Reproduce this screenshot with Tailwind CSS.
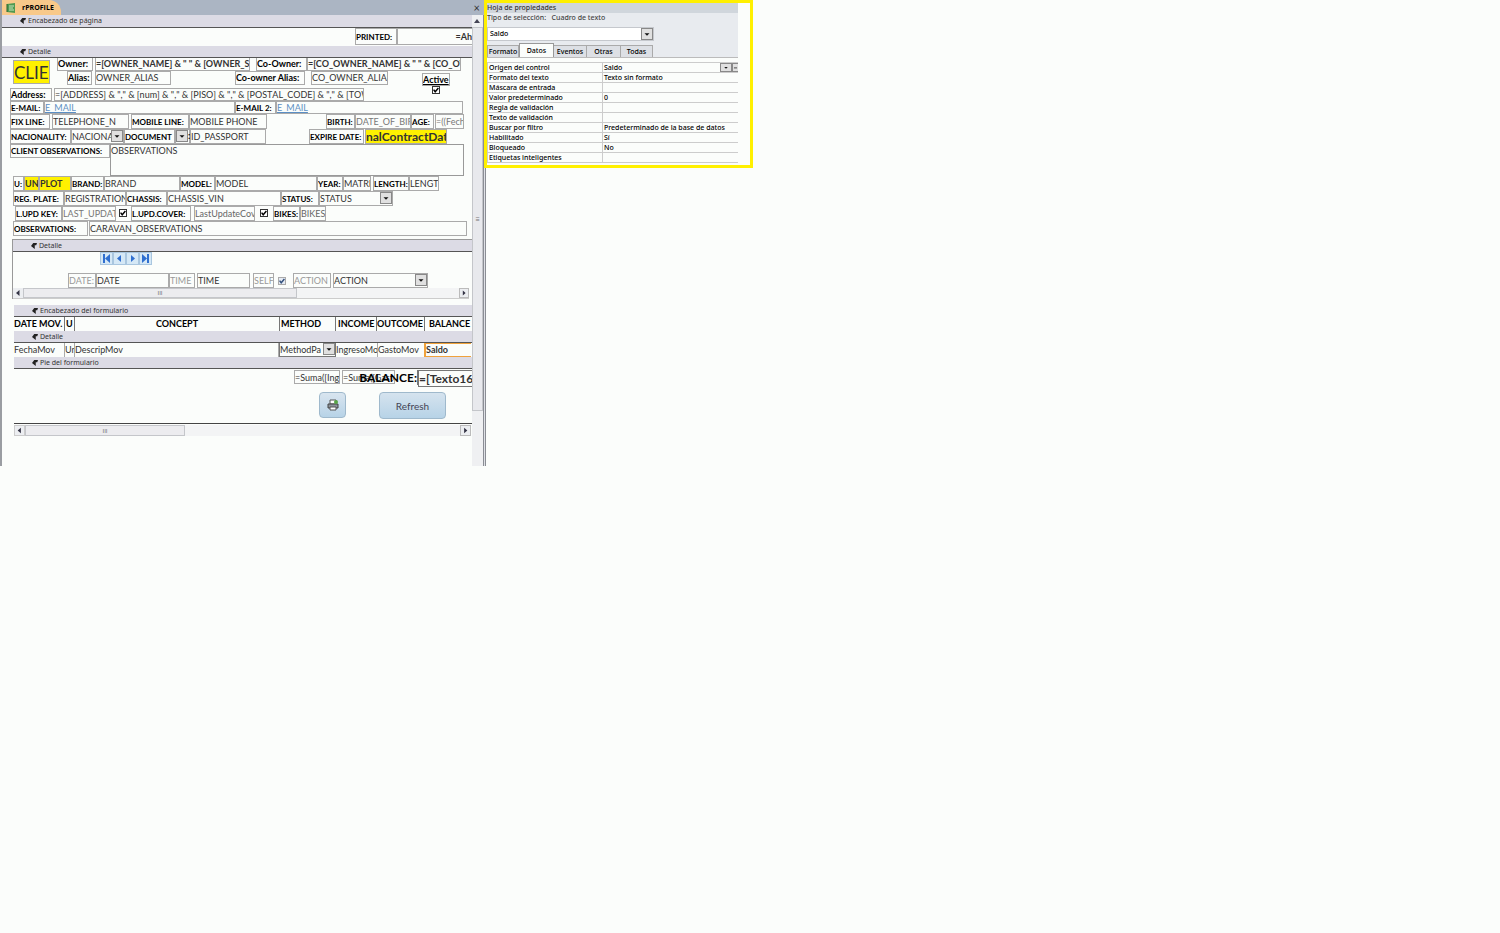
<!DOCTYPE html>
<html lang="es">
<head>
<meta charset="utf-8">
<title>rPROFILE</title>
<script src="https://cdn.jsdelivr.net/npm/@tailwindcss/browser@4"></script>
</head>
<body class="min-h-screen bg-[#fbfdfb] text-[#222]">
<svg class="hidden">
  <symbol id="down" viewBox="0 0 12 12"><path d="M3 5h6L6 8z" fill="#111"/></symbol>
  <symbol id="tick" viewBox="0 0 10 10"><path d="M2 4.5 4 7.2 8 2.5" fill="none" stroke="currentColor" stroke-width="1.8"/></symbol>
  <symbol id="bandmark" viewBox="0 0 8 8"><path d="M3 0h5L7 3H5v5L0 4z" fill="#222"/></symbol>
  <symbol id="left" viewBox="0 0 10 10"><path d="M6.500 2v6L3 5z" fill="#334"/></symbol>
  <symbol id="right" viewBox="0 0 10 10"><path d="M3.500 2v6L7 5z" fill="#334"/></symbol>
</svg>
<div class="flex items-start">

<!-- Form in design view -->
<main class="w-[486px] shrink-0 border-l-2 border-[#9a9da2] font-[Lato,sans-serif] text-[9px] leading-[12px] [&_label]:flex [&_label]:shrink-0 [&_label]:items-center [&_label]:overflow-hidden [&_label]:whitespace-nowrap [&_label]:border [&_label]:border-[#aaa] [&_label]:font-bold [&_label]:text-black [&_input]:min-w-0 [&_input]:shrink-0 [&_input]:border [&_input]:border-[#aaa] [&_input]:text-[#333] [&_select]:appearance-none [&_select]:min-w-0 [&_select]:flex-1 [&_select]:text-[#333]">
  <div class="flex h-[15px] items-stretch bg-[#abb5c3] pr-[6px]">
    <div class="flex w-[59px] items-center gap-[6px] rounded-tr-xl bg-[#f8c98a] pl-1 font-[Open_Sans,sans-serif] text-[7px] font-bold text-black">
      <svg class="size-[10px]" viewBox="0 0 10 10"><path d="M1 1 9 0v10L1 9z" fill="#4f9a52"/><path d="M3 3h5M3 5h4M3 7h5" stroke="#cde8bd"/><path d="M1 1v8" stroke="#27632f"/></svg>
      rPROFILE
    </div>
    <button class="ml-auto text-[11px] leading-[14px] text-[#333]" aria-label="Cerrar">×</button>
  </div>

  <div class="flex">
    <div class="w-[470px] shrink-0">
      <div class="flex h-[13px] items-center gap-[2px] border-b border-[#555] bg-[#dcdbe5] pl-[18px] font-[Noto_Sans,sans-serif] text-[7px] text-[#333]"><svg class="size-[6px]"><use href="#bandmark"/></svg>Encabezado de página</div>
      <div class="flex h-[18px] items-start pl-[353px]">
        <label for="printed" class="h-[17px] w-[42px] text-[8px]">PRINTED:</label>
        <input id="printed" value="=Ah" class="h-[17px] flex-1 border-r-0! text-right font-bold">
      </div>
      <div class="flex h-[12px] items-center gap-[2px] border-b border-[#555] bg-[#dcdbe5] pl-[18px] font-[Noto_Sans,sans-serif] text-[7px] text-[#333]"><svg class="size-[6px]"><use href="#bandmark"/></svg>Detalle</div>

      <!-- Client -->
      <div class="flex h-[30px] pl-[11px]">
        <input aria-label="Client" value="CLIE" class="mt-[2px] h-[24px] w-[37px] bg-[#fff100] text-[17px]">
        <div>
          <div class="flex h-[13px] pl-[7px]">
            <label for="owner" class="w-[36px] border-t-0!">Owner:</label>
            <input id="owner" value='=[OWNER_NAME] &amp; " " &amp; [OWNER_SURNAME]' class="ml-[2px] w-[155px] border-t-0! font-bold">
            <label for="coowner" class="ml-[6px] w-[51px] border-t-0!">Co-Owner:</label>
            <input id="coowner" value='=[CO_OWNER_NAME] &amp; " " &amp; [CO_OWNER]' class="w-[154px] border-t-0! font-bold">
          </div>
          <div class="flex h-[14px] pl-[17px]">
            <label for="alias" class="w-[25px]">Alias:</label>
            <input id="alias" value="OWNER_ALIAS" class="ml-[3px] w-[76px]">
            <label for="coalias" class="ml-[64px] w-[70px]">Co-owner Alias:</label>
            <input id="coalias" value="CO_OWNER_ALIAS" class="ml-[6px] w-[77px]">
            <div class="ml-[34px] mt-[2px] flex flex-col items-center">
              <label for="active" class="h-[13px] underline">Active</label>
              <span class="grid size-[8px]"><input id="active" type="checkbox" checked class="size-[8px] appearance-none border-[#333]! bg-white [grid-area:1/1]"><svg class="pointer-events-none size-[8px] text-black [grid-area:1/1]"><use href="#tick"/></svg></span>
            </div>
          </div>
        </div>
      </div>
      <div class="flex h-[13px] pl-[8px]">
        <label for="address" class="w-[42px]">Address:</label>
        <input id="address" value='=[ADDRESS] &amp; "," &amp; [num] &amp; "," &amp; [PISO] &amp; "," &amp; [POSTAL_CODE] &amp; "," &amp; [TOWN]' class="ml-[2px] w-[310px] [font-kerning:none]">
      </div>
      <div class="[&_label]:text-[8px]">
      <div class="flex h-[13px] pl-[8px]">
        <label for="email" class="w-[34px]">E-MAIL:</label>
        <input id="email" value="E_MAIL" class="w-[191px] text-[#5b8fc4]! underline">
        <label for="email2" class="w-[41px]">E-MAIL 2:</label>
        <input id="email2" value="E_MAIL" class="w-[187px] text-[#5b8fc4]! underline">
      </div>
      <div class="flex h-[15px] pl-[8px]">
        <label for="fix" class="w-[40px]">FIX LINE:</label>
        <input id="fix" value="TELEPHONE_N" class="ml-[2px] w-[77px]">
        <label for="mobile" class="ml-[2px] w-[58px]">MOBILE LINE:</label>
        <input id="mobile" value="MOBILE PHONE" class="w-[78px]">
        <label for="birth" class="ml-[59px] w-[29px]">BIRTH:</label>
        <input id="birth" value="DATE_OF_BIRTH" class="w-[56px] text-[#777]!">
        <label for="age" class="w-[23px]">AGE:</label>
        <input id="age" value="=((Fecha" class="ml-px w-[29px] text-[#777]!">
      </div>
      <div class="flex h-[15px] pl-[8px]">
        <label for="nac" class="w-[61px]">NACIONALITY:</label>
        <span class="flex w-[53px] border border-[#aaa]"><select id="nac"><option>NACIONA</option></select><svg class="size-[12px] border border-[#888] bg-[#e0e0e0]"><use href="#down"/></svg></span>
        <label for="doc" class="w-[51px]">DOCUMENT</label>
        <span class="flex w-[15px] border border-[#aaa] font-bold text-black"><svg class="size-[12px] shrink-0 border border-[#888] bg-[#e0e0e0]"><use href="#down"/></svg>:</span>
        <input id="doc" value="ID_PASSPORT" class="w-[76px]">
        <label for="expire" class="ml-[43px] w-[55px]">EXPIRE DATE:</label>
        <input id="expire" value="nalContractDate" class="ml-px w-[82px] bg-[#fff100] text-[12px] font-bold text-[#222]">
      </div>
      <div class="flex h-[32px] items-start pl-[8px]">
        <label for="obs" class="h-[14px] w-[100px]">CLIENT OBSERVATIONS:</label>
        <textarea id="obs" class="h-[32px] w-[354px] resize-none overflow-hidden border border-[#999] text-[#333]">OBSERVATIONS</textarea>
      </div>

      <!-- Caravan -->
      <div class="flex h-[15px] pl-[11px]">
        <label for="unit" class="w-[11px]">U:</label>
        <input id="unit" value="UN" class="w-[15px] bg-[#fff100] font-bold">
        <input aria-label="Plot" value="PLOT" class="w-[32px] bg-[#fff100] font-bold">
        <label for="brand" class="w-[33px]">BRAND:</label>
        <input id="brand" value="BRAND" class="w-[76px]">
        <label for="model" class="w-[35px]">MODEL:</label>
        <input id="model" value="MODEL" class="w-[102px]">
        <label for="year" class="w-[26px]">YEAR:</label>
        <input id="year" value="MATRICULA" class="w-[28px]">
        <label for="length" class="ml-[2px] w-[36px]">LENGTH:</label>
        <input id="length" value="LENGTH" class="w-[30px]">
      </div>
      <div class="flex h-[15px] pl-[11px]">
        <label for="plate" class="w-[51px]">REG. PLATE:</label>
        <input id="plate" value="REGISTRATION" class="w-[62px]">
        <label for="chassis" class="w-[41px]">CHASSIS:</label>
        <input id="chassis" value="CHASSIS_VIN" class="w-[114px]">
        <label for="status" class="w-[38px]">STATUS:</label>
        <span class="flex w-[74px] border border-[#aaa]"><select id="status"><option>STATUS</option></select><svg class="size-[12px] border border-[#888] bg-[#e0e0e0]"><use href="#down"/></svg></span>
      </div>
      <div class="flex h-[15px] pl-[13px]">
        <label for="updkey" class="w-[47px]">L.UPD KEY:</label>
        <input id="updkey" value="LAST_UPDATE" class="w-[54px] text-[#777]!">
        <span class="ml-[3px] mt-[3px] grid size-[8px]"><input aria-label="Key" type="checkbox" checked class="size-[8px] appearance-none border-[#333]! bg-white [grid-area:1/1]"><svg class="pointer-events-none size-[8px] text-black [grid-area:1/1]"><use href="#tick"/></svg></span>
        <label for="updcover" class="ml-[4px] w-[60px]">L.UPD.COVER:</label>
        <input id="updcover" value="LastUpdateCover" class="ml-[3px] w-[61px] text-[#666]!">
        <span class="ml-[5px] mt-[3px] grid size-[8px]"><input aria-label="Cover" type="checkbox" checked class="size-[8px] appearance-none border-[#333]! bg-white [grid-area:1/1]"><svg class="pointer-events-none size-[8px] text-black [grid-area:1/1]"><use href="#tick"/></svg></span>
        <label for="bikes" class="ml-[5px] w-[27px]">BIKES:</label>
        <input id="bikes" value="BIKES" class="w-[26px] text-[#666]!">
      </div>
      <div class="flex h-[15px] pl-[11px]">
        <label for="caravan" class="w-[75px]">OBSERVATIONS:</label>
        <input id="caravan" value="CARAVAN_OBSERVATIONS" class="ml-px w-[378px]">
      </div>
      </div>

      <!-- Actions subform -->
      <section class="ml-[10px] mt-[3px] border-l border-t border-[#999]">
        <div class="flex h-[12px] items-center gap-[2px] border-b border-[#555] bg-[#dcdbe5] pl-[18px] font-[Noto_Sans,sans-serif] text-[7px] text-[#333]"><svg class="size-[6px]"><use href="#bandmark"/></svg>Detalle</div>
        <div class="flex h-[21px] items-start pl-[87px] text-[#2f6fd0]">
          <button aria-label="Primero" class="border border-[#a9c6df] bg-[#d5e8f6]"><svg class="size-[11px]" viewBox="0 0 11 11"><path d="M2 1h2v9H2zM9 1v9L4 5.500z" fill="currentColor"/></svg></button>
          <button aria-label="Anterior" class="border border-[#a9c6df] bg-[#d5e8f6]"><svg class="size-[11px]" viewBox="0 0 11 11"><path d="M7 2v7L3 5.500z" fill="currentColor"/></svg></button>
          <button aria-label="Siguiente" class="border border-[#a9c6df] bg-[#d5e8f6]"><svg class="size-[11px]" viewBox="0 0 11 11"><path d="M4 2v7l4-3.500z" fill="currentColor"/></svg></button>
          <button aria-label="Último" class="border border-[#a9c6df] bg-[#d5e8f6]"><svg class="size-[11px]" viewBox="0 0 11 11"><path d="M7 1h2v9H7zM2 1v9l5-4.500z" fill="currentColor"/></svg></button>
        </div>
        <div class="flex h-[15px] pl-[55px]">
          <label for="date" class="w-[28px] font-normal! text-[#999]!">DATE:</label>
          <input id="date" value="DATE" class="w-[73px]">
          <label for="time" class="w-[26px] font-normal! text-[#999]!">TIME</label>
          <input id="time" value="TIME" class="ml-[2px] w-[53px]">
          <label for="self" class="ml-[3px] w-[21px] font-normal! text-[#999]!">SELF</label>
          <span class="ml-[4px] mt-[4px] grid size-[8px]"><input id="self" type="checkbox" checked class="size-[8px] appearance-none bg-[#e5ebf3] [grid-area:1/1]"><svg class="pointer-events-none size-[8px] text-[#33507c] [grid-area:1/1]"><use href="#tick"/></svg></span>
          <label for="action" class="ml-[7px] w-[38px] font-normal! text-[#999]!">ACTION</label>
          <span class="ml-[2px] flex w-[95px] border border-[#aaa]"><select id="action"><option>ACTION</option></select><svg class="size-[12px] border border-[#888] bg-[#e0e0e0]"><use href="#down"/></svg></span>
        </div>
        <div class="flex h-[11px] w-[456px] border-b border-[#ccc] bg-[#f3f4f5]">
          <svg class="size-[10px] bg-[#eceef1]"><use href="#left"/></svg>
          <div class="flex w-[274px] items-center justify-center border border-[#c4c6ca] bg-[#ececef] text-[6px] text-[#777]">III</div>
          <svg class="ml-auto size-[10px] border border-[#bbb] bg-[#eceef1]"><use href="#right"/></svg>
        </div>
      </section>

      <!-- Movements subform -->
      <section class="ml-[12px] mt-[6px] [&_label]:border-y-0! [&_label]:border-l-0! [&_label]:border-[#777]!">
        <div class="flex h-[12px] items-center gap-[2px] border-b border-[#555] bg-[#dcdbe5] pl-[18px] font-[Noto_Sans,sans-serif] text-[7px] text-[#333]"><svg class="size-[6px]"><use href="#bandmark"/></svg>Encabezado del formulario</div>
        <div class="flex h-[14px]">
          <label for="fecha" class="w-[51px]">DATE MOV.</label>
          <label for="un" class="w-[10px] pl-px">U</label>
          <label for="descrip" class="w-[205px] justify-center">CONCEPT</label>
          <label for="method" class="w-[56px] pl-px">METHOD</label>
          <label for="ingreso" class="w-[41px] pl-[2px]">INCOME</label>
          <label for="gasto" class="w-[48px]">OUTCOME</label>
          <label for="saldo" class="w-[47px] border-r-0! pl-[4px]">BALANCE</label>
        </div>
        <div class="flex h-[12px] items-center gap-[2px] border-b border-[#555] bg-[#dcdbe5] pl-[18px] font-[Noto_Sans,sans-serif] text-[7px] text-[#333]"><svg class="size-[6px]"><use href="#bandmark"/></svg>Detalle</div>
        <div class="flex h-[14px] [&_input]:border-y-0!">
          <input id="fecha" value="FechaMov" class="w-[51px] border-l-0!">
          <input id="un" value="Unidad" class="w-[10px] border-l-0!">
          <input id="descrip" value="DescripMov" class="w-[204px] border-l-0!">
          <span class="flex w-[57px] border border-t-0 border-[#777]"><select id="method"><option>MethodPa</option></select><svg class="size-[12px] border border-[#888] bg-[#e0e0e0]"><use href="#down"/></svg></span>
          <input id="ingreso" value="IngresoMov" class="w-[42px] border-l-0!">
          <input id="gasto" value="GastoMov" class="w-[46px] border-x-0!">
          <span class="flex w-[47px] border-y border-l-2 border-[#f0a23c]"><input id="saldo" value="Saldo" class="w-full border-x-0! font-bold"></span>
        </div>
        <div class="flex h-[12px] items-center gap-[2px] border-b border-[#555] bg-[#dcdbe5] pl-[18px] font-[Noto_Sans,sans-serif] text-[7px] text-[#333]"><svg class="size-[6px]"><use href="#bandmark"/></svg>Pie del formulario</div>
        <div class="h-[55px] border-b border-[#444]">
          <div class="flex h-[19px] items-start pl-[280px] pt-px">
            <input aria-label="Suma ingresos" value="=Suma([Ingreso])" class="h-[14px] w-[46px]">
            <input aria-label="Suma gastos" value="=Suma([Gasto])" class="ml-[2px] h-[14px] w-[53px]">
            <label for="total" class="-ml-[46px] h-[15px] w-[69px] justify-end border-x! border-b! text-[12px]">BALANCE:</label>
            <input id="total" value="=[Texto16]" class="h-[17px] w-[54px] border-r-0! border-[#777]! text-[12px] font-bold">
          </div>
          <div class="flex pl-[305px] pt-[4px]">
            <button aria-label="Imprimir" class="flex h-[26px] w-[27px] items-center justify-center rounded-sm border border-[#9fb9cc] bg-gradient-to-b from-[#d9e5ef] to-[#b7d3e7]"><svg class="size-[12px]" viewBox="0 0 12 12"><path d="M3 1h6v4H3z" fill="#fff" stroke="#555"/><path d="M1 5h10v4H1z" fill="#8a9299" stroke="#444"/><path d="M3 8h6v3H3z" fill="#fff" stroke="#555"/><circle cx="9" cy="3" r="2" fill="#58a646"/></svg></button>
            <button class="ml-[33px] h-[27px] w-[67px] rounded-sm border border-[#9fb9cc] bg-gradient-to-b from-[#d5e3ee] to-[#b7d3e7] text-[10px] text-[#445]">Refresh</button>
          </div>
        </div>
        <div class="mt-px flex h-[11px] w-[457px] bg-[#f3f4f5]">
          <svg class="h-[11px] w-[11px] border border-[#ccc] bg-[#eceef1]"><use href="#left"/></svg>
          <div class="flex w-[160px] items-center justify-center border border-[#c4c6ca] bg-[#ececef] text-[6px] text-[#777]">III</div>
          <svg class="ml-auto h-[11px] w-[11px] border border-[#bbb] bg-[#eceef1]"><use href="#right"/></svg>
        </div>
      </section>
      <div class="h-[30px]"></div>
    </div>

    <!-- Vertical scrollbar -->
    <div class="flex w-[11px] flex-col bg-[#eff0f2]">
      <svg class="h-[12px] w-[10px]" viewBox="0 0 10 12"><path d="M2 8h6L5 4z" fill="#445"/></svg>
      <div class="flex h-[384px] items-center justify-center border border-[#c4c6ca] bg-[#e8e9ed] text-[8px] text-[#777]">≡</div>
    </div>
    <div class="w-[3px] border-x border-[#8a8d94] bg-[#dfe1e6]"></div>
  </div>
</main>

<!-- Property sheet -->
<aside class="relative -ml-[2px] w-[269px] border-[3px] border-[#fff000] bg-[#fbfdfb] pr-[12px] font-[Noto_Sans,sans-serif] text-[7px] font-medium leading-[10px] text-black">
  <div class="bg-[#e8ebef]">
    <h2 class="h-[10px] bg-[#d0d6dc] text-[#333]">Hoja de propiedades</h2>
    <p class="h-[14px] text-[#444]">Tipo de selección: &nbsp;&nbsp;Cuadro de texto</p>
    <div class="flex h-[14px] w-[167px] items-center border border-[#c5c8cd] bg-white">
      <select aria-label="Control" class="min-w-0 flex-1 appearance-none pl-[2px]"><option>Saldo</option></select>
      <svg class="size-[12px] border border-[#888] bg-[#e0e0e0]"><use href="#down"/></svg>
    </div>
    <div class="flex h-[17px] items-end border-b border-[#bbb]" role="tablist">
      <button role="tab" class="h-[12px] w-[32px] border border-b-0 border-[#aaa] bg-[#dde0e5]">Formato</button>
      <button role="tab" aria-selected="true" class="h-[14px] w-[35px] border border-b-0 border-[#999] bg-[#fbfdfb]">Datos</button>
      <button role="tab" class="h-[12px] w-[33px] border border-b-0 border-l-0 border-[#aaa] bg-[#dde0e5]">Eventos</button>
      <button role="tab" class="h-[12px] w-[34px] border border-b-0 border-l-0 border-[#aaa] bg-[#dde0e5]">Otras</button>
      <button role="tab" class="h-[12px] w-[32px] border border-b-0 border-l-0 border-[#aaa] bg-[#dde0e5]">Todas</button>
    </div>
  </div>
  <div class="bg-[#fbfdfb] pt-[4px] pb-[2px]">
    <table class="w-full table-fixed border-collapse border-l border-t border-[#ccc] [&_td]:h-[10px] [&_td]:border-b [&_td]:border-[#ccc] [&_td]:p-0 [&_td]:pl-px [&_td]:leading-[9px] [&_th]:h-[10px] [&_th]:w-[115px] [&_th]:border-b [&_th]:border-r [&_th]:border-[#ccc] [&_th]:p-0 [&_th]:pl-px [&_th]:text-left [&_th]:font-medium [&_th]:leading-[9px]">
      <tr><th>Origen del control</th><td><div class="flex h-[9px] items-center justify-between">Saldo<span class="flex"><svg class="h-[9px] w-[12px] border border-[#888] bg-[#e0e0e0]"><use href="#down"/></svg><svg class="h-[9px] w-[6px] border border-r-0 border-[#888] bg-[#e0e0e0]" viewBox="0 0 6 9"><path d="M1 5h4" stroke="#222"/></svg></span></div></td></tr>
      <tr><th>Formato del texto</th><td>Texto sin formato</td></tr>
      <tr><th>Máscara de entrada</th><td></td></tr>
      <tr><th>Valor predeterminado</th><td>0</td></tr>
      <tr><th>Regla de validación</th><td></td></tr>
      <tr><th>Texto de validación</th><td></td></tr>
      <tr><th>Buscar por filtro</th><td>Predeterminado de la base de datos</td></tr>
      <tr><th>Habilitado</th><td>Sí</td></tr>
      <tr><th>Bloqueado</th><td>No</td></tr>
      <tr><th>Etiquetas inteligentes</th><td></td></tr>
    </table>
  </div>
</aside>
</div>
</body>
</html>
